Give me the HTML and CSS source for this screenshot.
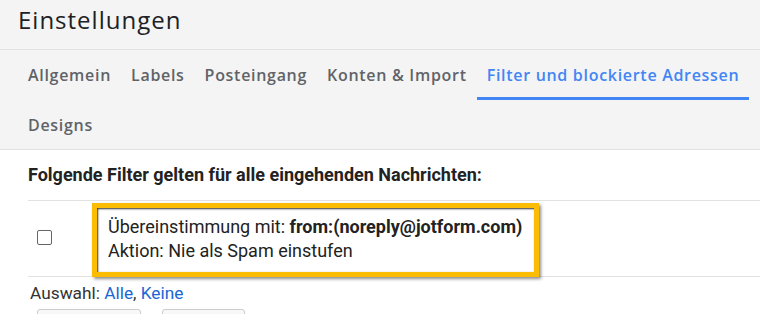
FILE: index.html
```html
<!DOCTYPE html>
<html lang="de">
<head>
    <meta charset="UTF-8">
    <title>Einstellungen</title>
    <link rel="stylesheet" href="styles.css">
</head>
<body>

    <div class="header">
        <h1>Einstellungen</h1>
    </div>

    <div class="tabs">
        <a class="tab">Allgemein</a>
        <a class="tab">Labels</a>
        <a class="tab">Posteingang</a>
        <a class="tab">Konten &amp; Import</a>
        <a class="tab active">Filter und blockierte Adressen</a>
        <a class="tab">Designs</a>
    </div>

    <div class="content">
        <p class="intro">Folgende Filter gelten für alle eingehenden Nachrichten:</p>

        <div class="filter-row">
            <div class="check-cell">
                <span class="checkbox"></span>
            </div>
            <div class="highlight">
                <div>Übereinstimmung mit: <b>from:(noreply@jotform.com)</b></div>
                <div>Aktion: Nie als Spam einstufen</div>
            </div>
        </div>

        <div class="select-line">
            Auswahl: <a>Alle</a>, <a>Keine</a>
        </div>

        <div class="buttons">
            <span class="btn"></span>
            <span class="btn small"></span>
        </div>
    </div>

</body>
</html>
```

FILE: styles.css
```css
body {
    margin: 0;
    background: #fff;
    font-family: Roboto, "Liberation Sans", sans-serif;
    color: #222;
    overflow: hidden;
}

.header {
    background: #f4f4f4;
    height: 49px;
    border-bottom: 1px solid #e2e2e2;
    padding-left: 18px;
}

.header h1 {
    margin: 0;
    font-family: "Open Sans", sans-serif;
    font-weight: 400;
    font-size: 24px;
    letter-spacing: 1px;
    line-height: 40px;
    color: #202124;
}

.tabs {
    background: #f4f4f4;
    border-bottom: 1px solid #e2e2e2;
    display: flex;
    flex-wrap: wrap;
    padding-left: 18px;
}

.tab {
    font-family: "Open Sans", sans-serif;
    font-weight: 600;
    font-size: 16px;
    letter-spacing: 0.7px;
    color: #5f6368;
    height: 49.5px;
    line-height: 50px;
    padding: 0 10px;
    box-sizing: border-box;
}

.tab.active {
    color: #4285f4;
    border-bottom: 3px solid #4285f4;
}

.content {
    padding-left: 28px;
}

.intro {
    margin: 0;
    font-weight: 700;
    font-size: 18px;
    line-height: 50px;
    color: #222;
}

.filter-row {
    display: flex;
    align-items: center;
    height: 75px;
    border-top: 1px solid #e2e2e2;
    border-bottom: 1px solid #e2e2e2;
}

.check-cell {
    width: 64px;
    padding-left: 9px;
    margin-bottom: 2px;
    box-sizing: border-box;
}

.checkbox {
    display: block;
    width: 13px;
    height: 13px;
    border: 1px solid #666;
    border-radius: 2px;
    background: #fff;
}

.highlight {
    align-self: flex-start;
    margin-top: 2px;
    width: 447px;
    height: 74px;
    flex-shrink: 0;
    box-sizing: border-box;
    border: 5px solid #fbbc04;
    box-shadow: inset 1px 1px 2px #333, 2px 2px 3px rgba(0, 0, 0, 0.45);
    background: #fff;
    padding: 7px 0 0 11px;
    font-size: 18px;
    line-height: 24px;
    color: #222;
}

.highlight b {
    font-weight: 700;
}

.select-line {
    font-size: 17.3px;
    line-height: 32px;
    padding-left: 2px;
    color: #333;
}

.select-line a {
    color: #1a66d6;
}

.buttons {
    display: flex;
    gap: 21px;
    padding-left: 9px;
}

.btn {
    display: block;
    width: 102px;
    height: 30px;
    border: 1px solid #ccc;
    border-radius: 3px;
    background: #f8f8f8;
}

.btn.small {
    width: 81px;
}
```
